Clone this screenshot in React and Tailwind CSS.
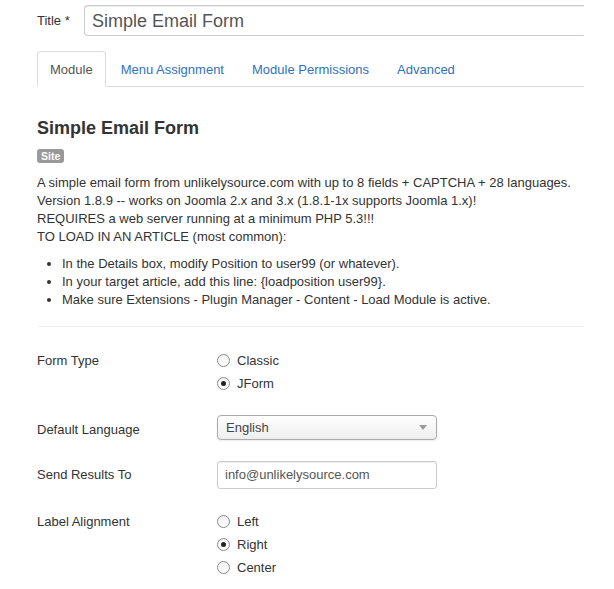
import React from 'react';

const tabs = ['Module', 'Menu Assignment', 'Module Permissions', 'Advanced'];

const Radio = ({ label, checked }) => (
  <div className="flex h-[23px] items-center">
    <span className="flex h-[13px] w-[13px] items-center justify-center rounded-full border border-[#8a8a8a] bg-gradient-to-b from-[#f2f2f2] to-white">
      {checked && <span className="h-[5px] w-[5px] rounded-full bg-[#222]" />}
    </span>
    <span className="ml-[7px]">{label}</span>
  </div>
);

const App = () => {
  return (
    <div className="min-h-[589px] w-[614px] bg-white font-['Liberation_Sans',Arial,sans-serif] text-[13px] leading-[18px] text-[#333]">
      <div className="w-[584px] pl-[37px]">
        {/* Title row - input runs past the visible edge */}
        <div className="flex items-center pt-[5px]">
          <label className="w-[47px] text-[13px]">Title *</label>
          <div className="flex h-[31px] flex-1 items-center rounded-l-[4px] border border-r-0 border-[#ccc] px-[7px] text-[18px] text-[#555] shadow-[inset_0_1px_1px_rgba(0,0,0,0.075)]">
            Simple Email Form
          </div>
        </div>

        {/* Tabs */}
        <ul className="mt-[15px] flex border-b border-[#ddd]">
          {tabs.map((t, i) => (
            <li key={t} className="-mb-px mr-[2px]">
              <span
                className={`block rounded-t-[4px] border px-[12px] pt-[9px] pb-[7px] leading-[18px] ${
                  i === 0
                    ? 'border-[#ddd] border-b-white bg-white text-[#555]'
                    : 'border-transparent text-[#2f72c0]'
                }`}
              >
                {t}
              </span>
            </li>
          ))}
        </ul>

        {/* Module info */}
        <h3 className="mt-[31px] text-[18px] font-bold leading-[20px] text-[#333]">Simple Email Form</h3>
        <span className="mt-[11px] inline-block rounded-[3px] bg-[#999] px-[4px] text-[10.5px] font-bold leading-[14px] text-white">
          Site
        </span>
        <p className="mt-[9px]">
          A simple email form from unlikelysource.com with up to 8 fields + CAPTCHA + 28 languages.
          <br />
          Version 1.8.9 -- works on Joomla 2.x and 3.x (1.8.1-1x supports Joomla 1.x)!
          <br />
          REQUIRES a web server running at a minimum PHP 5.3!!!
          <br />
          TO LOAD IN AN ARTICLE (most common):
        </p>
        <ul className="mt-[9px] ml-[25px] list-disc">
          <li>In the Details box, modify Position to user99 (or whatever).</li>
          <li>In your target article, add this line: {'{loadposition user99}'}.</li>
          <li>Make sure Extensions - Plugin Manager - Content - Load Module is active.</li>
        </ul>
        <hr className="mt-[17px] border-t border-[#eee]" />

        {/* Form */}
        <div className="mt-[22px] flex flex-col">
          <div className="flex">
            <div className="flex h-[23px] w-[180px] items-center">Form Type</div>
            <div>
              <Radio label="Classic" />
              <Radio label="JForm" checked />
            </div>
          </div>

          <div className="mt-[20px] flex">
            <div className="flex h-[25px] w-[180px] items-center pt-[5px]">Default Language</div>
            <div className="flex h-[25px] w-[220px] items-center justify-between rounded-[4px] border border-[#aaa] bg-gradient-to-b from-white to-[#eee] pl-[8px] pr-[9px] text-[#444] shadow-[0_1px_2px_rgba(0,0,0,0.08)]">
              <span>English</span>
              <span className="h-0 w-0 border-x-[4px] border-t-[5px] border-x-transparent border-t-[#999]" />
            </div>
          </div>

          <div className="mt-[21px] flex">
            <div className="flex h-[28px] w-[180px] items-center">Send Results To</div>
            <div className="flex h-[28px] w-[220px] items-center rounded-[3px] border border-[#ccc] px-[7px] text-[#555] shadow-[inset_0_1px_1px_rgba(0,0,0,0.075)]">
              info@unlikelysource.com
            </div>
          </div>

          <div className="mt-[21px] flex">
            <div className="flex h-[23px] w-[180px] items-center">Label Alignment</div>
            <div>
              <Radio label="Left" />
              <Radio label="Right" checked />
              <Radio label="Center" />
            </div>
          </div>
        </div>
      </div>
    </div>
  );
};

export default App;
